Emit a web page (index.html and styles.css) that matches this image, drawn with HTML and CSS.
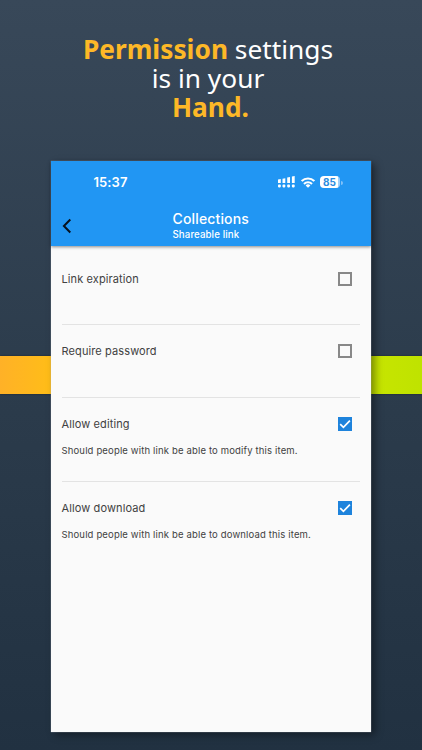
FILE: index.html
```html
<!DOCTYPE html>
<html lang="en">
<head>
<meta charset="utf-8">
<title>Permission settings</title>
<link rel="stylesheet" href="styles.css">
</head>
<body>
<h1 class="headline"><div><b>Permission</b> settings</div><div>is in your</div><div class="hand"><b>Hand.</b></div></h1>
<div class="band"></div>
<main class="phone">
  <header class="header">
    <div class="status">
      <span class="time">15:37</span>
      <svg class="signal" width="17" height="12" viewBox="0 0 17 12" fill="#fff"><path d="M0 3.600l2.800-.5v4H0zM4.500 2.700l2.800-.5v4.900H4.500zM9.200 1.600l2.800-.5v6H9.200zM13.900.5l2.800-.5v7.100h-2.800z"/><rect y="8.600" width="2.800" height="2.800" rx=".8"/><rect x="4.500" y="8.600" width="2.800" height="2.800" rx=".8"/><rect x="9.200" y="8.600" width="2.800" height="2.800" rx=".8"/><rect x="13.900" y="8.600" width="2.800" height="2.800" rx=".8"/></svg>
      <svg class="wifi" width="14" height="11" viewBox="0 0 14 11" fill="none" stroke="#fff" stroke-width="2.100"><path d="M.7 4.100a9 9 0 0 1 12.600 0M3 6.900a5.700 5.700 0 0 1 8 0"/><path d="M7 10.800L4.600 8.500a3.300 3.300 0 0 1 4.800 0z" fill="#fff" stroke="none"/></svg>
      <span class="battery">85</span><i class="tip"></i>
    </div>
    <div class="nav">
      <svg class="back" width="10" height="16" viewBox="0 0 10 16" fill="none" stroke="#07131f" stroke-width="2"><path d="M8.300 1.500L1.900 8l6.400 6.500"/></svg>
      <div class="titles"><div class="title">Collections</div><div class="subtitle">Shareable link</div></div>
    </div>
  </header>
  <section class="list">
    <div class="row"><div class="line"><span>Link expiration</span><i class="box"></i></div></div>
    <div class="row"><div class="line"><span>Require password</span><i class="box"></i></div></div>
    <div class="row tall"><div class="line"><span>Allow editing</span><i class="box checked"><svg width="14" height="14" viewBox="0 0 14 14" fill="none" stroke="#fff" stroke-width="1.700"><path d="M2.200 7.200l3.200 3.100 6.500-6.700"/></svg></i></div><p>Should people with link be able to modify this item.</p></div>
    <div class="row tall last"><div class="line"><span>Allow download</span><i class="box checked"><svg width="14" height="14" viewBox="0 0 14 14" fill="none" stroke="#fff" stroke-width="1.700"><path d="M2.200 7.200l3.200 3.100 6.500-6.700"/></svg></i></div><p>Should people with link be able to download this item.</p></div>
  </section>
</main>
</body>
</html>
```
FILE: styles.css
```css
* { box-sizing: border-box; }
body {
  position: relative;
  margin: 0;
  height: 750px;
  overflow: hidden;
  background: linear-gradient(#384859, #2b3b4b 55%, #213141);
  font-family: Inter, sans-serif;
}
.headline {
  margin: 0;
  height: 161px;
  padding-top: 35px;
  padding-right: 6px;
  text-align: center;
  color: #fff;
  font: 400 26.300px/29px "Noto Sans", sans-serif;
}
.headline b { color: #fdb827; font-weight: 700; }
.hand { padding-left: 5px; }
.band {
  position: absolute;
  top: 356px;
  left: 0;
  width: 100%;
  height: 38px;
  background: linear-gradient(90deg, #ffb127, #ffbd18 12%, #c9e500 86%, #bfe300);
  box-shadow: 0 0 2px rgba(0, 0, 0, .4);
}
.phone {
  position: relative;
  width: 320.500px;
  height: 570.500px;
  margin-left: 50.500px;
  background: #fafafa;
  box-shadow: 0 0 1px #aab4bd, 4px 3px 8px rgba(0, 0, 0, .4);
}
.header {
  height: 85px;
  background: #2196f3;
  color: #fff;
  box-shadow: 0 1px 3px rgba(0, 0, 0, .45);
}
.status {
  display: flex;
  align-items: center;
  height: 43px;
  padding-left: 43px;
}
.time { width: 184px; margin-top: -1px; font-size: 13px; font-weight: 600; letter-spacing: .1px; }
.signal { margin-top: -1px; }
.wifi { margin: -1px 0 0 6px; }
.battery {
  width: 20px;
  height: 12px;
  margin: -1px 0 0 5px;
  border-radius: 4px;
  background: linear-gradient(90deg, #fff 88%, #9fd0fa 88%);
  color: #2a8ce0;
  font-size: 10px;
  font-weight: 700;
  line-height: 12px;
  text-align: center;
}
.tip {
  width: 2px;
  height: 4px;
  margin-left: 1px;
  border-radius: 0 2px 2px 0;
  background: #82c1f8;
}
.nav { display: flex; align-items: flex-start; height: 42px; padding-left: 11px; }
.back { margin-top: 14px; }
.titles { margin: 6px 0 0 101px; }
.title { font-size: 14px; font-weight: 500; line-height: 18px; letter-spacing: .15px; }
.subtitle { font-size: 9.700px; font-weight: 500; line-height: 13px; letter-spacing: .1px; }
.list { padding: 6.500px 11px 0; color: #414141; }
.row {
  height: 72.500px;
  padding-top: 18px;
  border-bottom: 1px solid #e3e3e3;
}
.row.tall { height: 84.500px; }
.row.last { border: 0; }
.line {
  display: flex;
  align-items: center;
  justify-content: space-between;
  height: 16px;
  padding-right: 8px;
  font-size: 11px;
  letter-spacing: .11px;
}
.box {
  width: 14px;
  height: 14px;
  border: 2px solid #888;
}
.box.checked { border: 0; background: #1e83dc; }
.box svg { display: block; }
.row p {
  margin: 12px 0 0;
  font-size: 9.500px;
  line-height: 14px;
  letter-spacing: .155px;
  white-space: nowrap;
}
```
